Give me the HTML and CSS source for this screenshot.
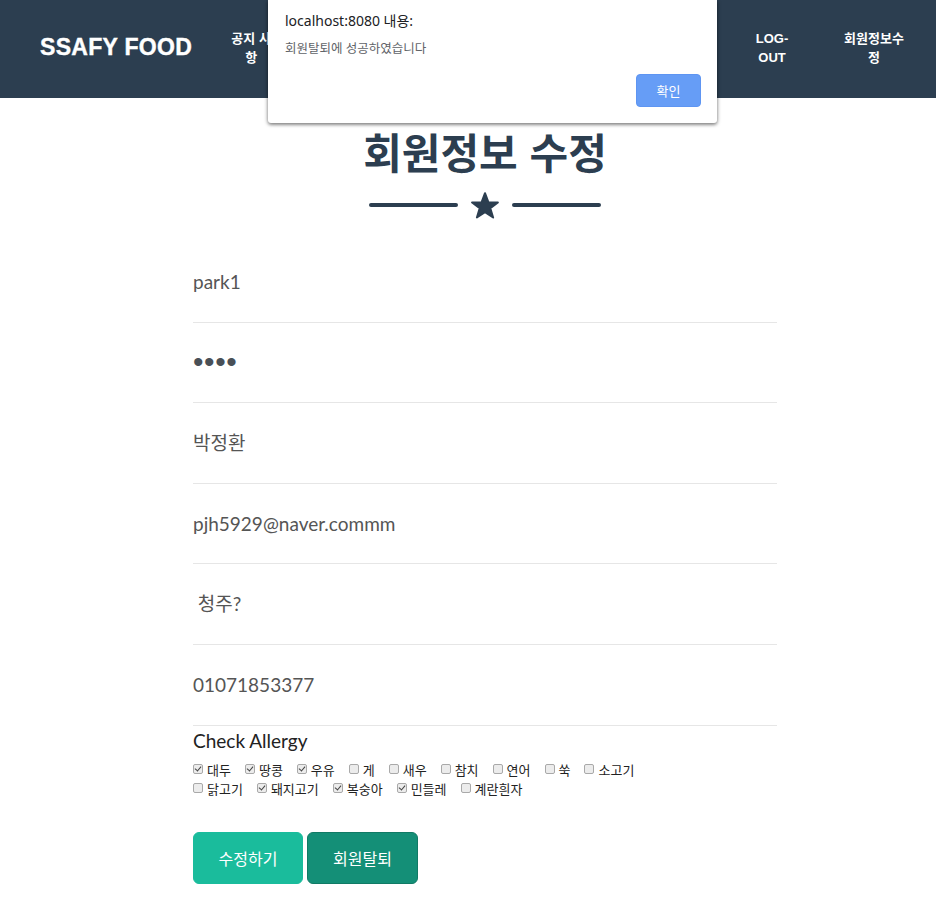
FILE: index.html
```html
<!DOCTYPE html>
<html lang="ko">
<head>
<meta charset="utf-8">
<title>회원정보 수정</title>
<link rel="stylesheet" href="styles.css">
</head>
<body>
<nav class="navbar">
  <a class="brand" href="#">SSAFY FOOD</a>
  <ul class="nav">
    <li class="nav-item nav-notice"><a href="#">공지 사항</a></li>
    <li class="nav-spacer"></li>
    <li class="nav-item nav-logout"><a href="#">LOG-OUT</a></li>
    <li class="nav-item nav-modify"><a href="#">회원정보수정</a></li>
  </ul>
</nav>

<div class="alert-dialog">
  <div class="alert-title">localhost:8080 내용:</div>
  <div class="alert-msg">회원탈퇴에 성공하였습니다</div>
  <div class="alert-actions"><button class="alert-btn">확인</button></div>
</div>

<main class="page">
  <section class="container">
    <h2 class="title">회원정보 수정</h2>
    <div class="divider">
      <span class="divider-line"></span>
      <svg class="divider-star" viewBox="0 0 100 96" width="28" height="27" aria-hidden="true">
        <polygon points="50,4 62,36 96,37 69,58 79,91 50,72 21,91 31,58 4,37 38,36" fill="#2c3e50" stroke="#2c3e50" stroke-width="7" stroke-linejoin="round"/>
      </svg>
      <span class="divider-line"></span>
    </div>

    <form class="form">
      <div class="field"><span class="field-value">park1</span></div>
      <div class="field"><span class="field-value field-pw">••••</span></div>
      <div class="field"><span class="field-value">박정환</span></div>
      <div class="field"><span class="field-value">pjh5929@naver.commm</span></div>
      <div class="field"><span class="field-value">&nbsp;청주?</span></div>
      <div class="field"><span class="field-value">01071853377</span></div>

      <div class="allergy">
        <div class="allergy-title">Check Allergy</div>
        <div class="allergy-row">
          <label class="chk"><span class="box on"></span>대두</label>
          <label class="chk"><span class="box on"></span>땅콩</label>
          <label class="chk"><span class="box on"></span>우유</label>
          <label class="chk"><span class="box"></span>게</label>
          <label class="chk"><span class="box"></span>새우</label>
          <label class="chk"><span class="box"></span>참치</label>
          <label class="chk"><span class="box"></span>연어</label>
          <label class="chk"><span class="box"></span>쑥</label>
          <label class="chk"><span class="box"></span>소고기</label>
        </div>
        <div class="allergy-row">
          <label class="chk"><span class="box"></span>닭고기</label>
          <label class="chk"><span class="box on"></span>돼지고기</label>
          <label class="chk"><span class="box on"></span>복숭아</label>
          <label class="chk"><span class="box on"></span>민들레</label>
          <label class="chk"><span class="box"></span>계란흰자</label>
        </div>
      </div>

      <div class="actions">
        <button type="button" class="btn btn-primary">수정하기</button>
        <button type="button" class="btn btn-dark">회원탈퇴</button>
      </div>
    </form>
  </section>
</main>
</body>
</html>
```

FILE: styles.css
```css
* { box-sizing: border-box; }

body {
  margin: 0;
  font-family: Lato, "Noto Sans CJK KR", sans-serif;
  color: #212529;
  background: #fff;
}

/* ---------- navbar ---------- */
.navbar {
  height: 98px;
  background: #2c3e50;
  display: flex;
  align-items: center;
  padding-left: 40px;
  padding-right: 28px;
}

.brand {
  font-family: "Liberation Sans", "Noto Sans CJK KR", sans-serif;
  font-weight: 700;
  font-size: 23px;
  letter-spacing: 0.3px;
  color: #fff;
  text-decoration: none;
  white-space: nowrap;
  margin-top: -4px;
  -webkit-text-stroke: 0.4px #fff;
}

.nav {
  list-style: none;
  margin: -3px 0 0 34px;
  padding: 0;
  flex: 1;
  display: flex;
  align-items: center;
}

.nav-item {
  text-align: center;
  font-family: "Liberation Sans", "Noto Sans CJK KR", sans-serif;
  font-weight: 700;
  font-size: 13px;
  line-height: 19px;
  text-transform: uppercase;
}

.nav-item a {
  color: #fff;
  text-decoration: none;
}

.nav-notice { width: 50px; }
.nav-spacer { flex: 1; }
.nav-logout { width: 50px; }
.nav-modify { width: 68px; margin-left: 43px; }

/* ---------- alert dialog ---------- */
.alert-dialog {
  position: absolute;
  top: 0;
  left: 268px;
  width: 449px;
  height: 123px;
  background: #fff;
  border-radius: 0 0 3px 3px;
  box-shadow: 0 1px 4px rgba(0, 0, 0, 0.45), 0 2px 3px rgba(0, 0, 0, 0.2);
  padding: 11px 16px 16px 17px;
  font-family: "Noto Sans", "Noto Sans CJK KR", sans-serif;
}

.alert-title {
  font-size: 14px;
  line-height: 20px;
  color: #202124;
}

.alert-msg {
  margin-top: 9px;
  font-size: 12.5px;
  line-height: 18px;
  color: #5f6368;
}

.alert-actions {
  display: flex;
  justify-content: flex-end;
  margin-top: 16px;
}

.alert-btn {
  width: 65px;
  height: 33px;
  border: 1px solid #5e95f2;
  border-radius: 4px;
  background: #669df6;
  color: #fff;
  font-family: "Noto Sans", "Noto Sans CJK KR", sans-serif;
  font-size: 13px;
  padding: 0;
}

/* ---------- page ---------- */
.page {
  padding-left: 34px;
}

.container {
  width: 584px;
  margin: 0 auto;
}

.title {
  margin: 32px 0 0;
  text-align: center;
  font-family: "Noto Sans CJK KR", sans-serif;
  font-weight: 700;
  font-size: 42px;
  line-height: 42px;
  color: #2c3e50;
}

.divider {
  margin-top: 19px;
  display: flex;
  align-items: center;
  justify-content: center;
  gap: 13px;
  height: 28px;
}

.divider-line {
  width: 89px;
  height: 4px;
  border-radius: 2px;
  background: #2c3e50;
}

.divider-star { display: block; }

/* ---------- form ---------- */
.form {
  margin-top: 23px;
}

.field {
  height: 80.6px;
  border-bottom: 1px solid #e6e6e6;
  display: flex;
  align-items: center;
}

.field-value {
  font-family: Lato, "Noto Sans CJK KR", sans-serif;
  font-size: 19px;
  line-height: 24px;
  color: #555;
  white-space: pre;
}

.field-pw {
  font-family: "Liberation Sans", sans-serif;
  font-size: 30px;
  letter-spacing: 0.6px;
  color: #495057;
}

.allergy {
  padding-top: 4px;
}

.allergy-title {
  font-family: Lato, sans-serif;
  font-size: 19px;
  line-height: 22px;
  color: #222;
}

.allergy-row {
  display: flex;
  gap: 14px;
  font-family: "Noto Sans CJK KR", sans-serif;
  font-size: 13px;
  line-height: 19px;
  color: #222;
}

.allergy-title + .allergy-row { margin-top: 8px; }

.chk {
  display: flex;
  align-items: center;
}

.box {
  width: 10px;
  height: 10px;
  margin-right: 4px;
  border: 1px solid #a9a9a9;
  border-radius: 2px;
  background: #ececec;
  position: relative;
}

.box.on::after {
  content: "";
  position: absolute;
  left: 2px;
  top: 0px;
  width: 3px;
  height: 5px;
  border: solid #444;
  border-width: 0 1.5px 1.5px 0;
  transform: rotate(40deg);
}

.actions {
  margin-top: 34px;
  display: flex;
  gap: 4px;
}

.btn {
  height: 52px;
  border-radius: 6px;
  color: #fff;
  font-family: "Noto Sans CJK KR", sans-serif;
  font-size: 16px;
  padding: 0;
}

.btn-primary {
  width: 110px;
  background: #1abc9c;
  border: 1px solid #1abc9c;
}

.btn-dark {
  width: 111px;
  background: #148f77;
  border: 1px solid #117a65;
}
```
